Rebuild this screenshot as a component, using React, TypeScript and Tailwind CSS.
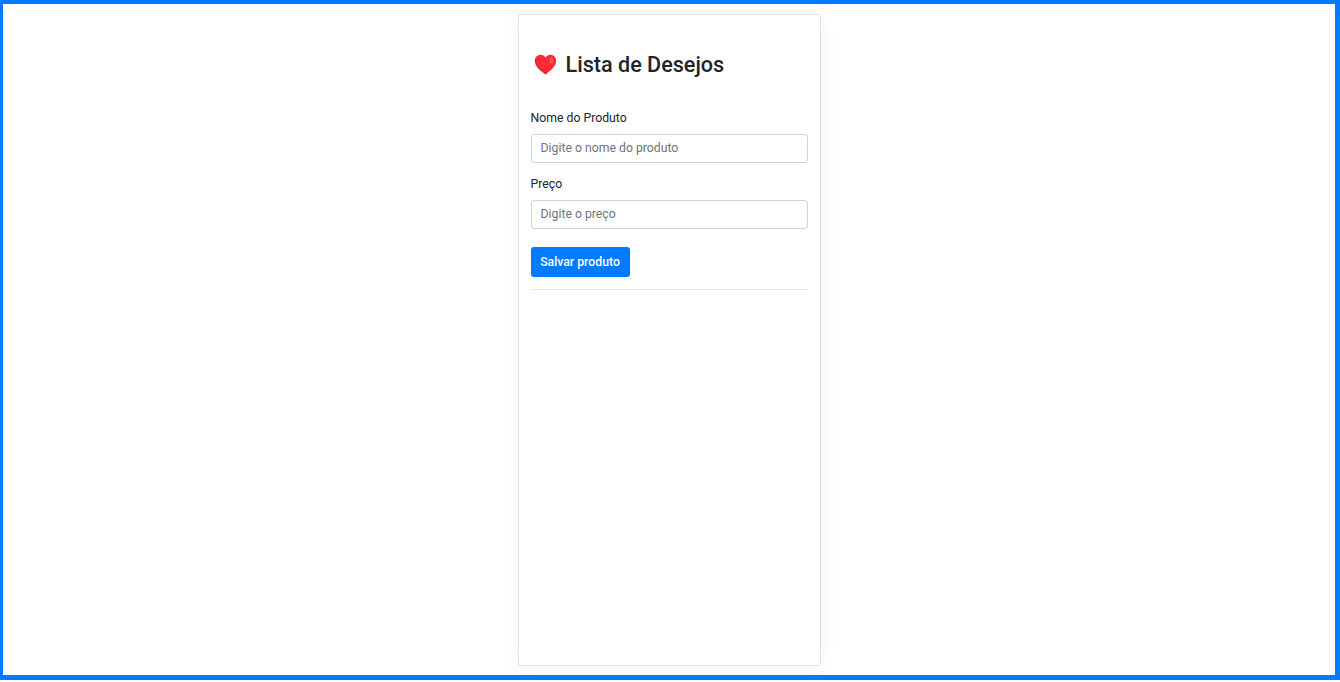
export default function App() {
  return (
    <div className="h-[680px] w-full overflow-hidden bg-white border-solid border-[#007bff] border-t-4 border-r-[5px] border-b-[5px] border-l-[3px] font-['Roboto',sans-serif] flex justify-center">
      <div className="mt-[10px] w-[303px] h-[652px] bg-white border border-[#e3e3e3] rounded-[3px] shadow-[0_0_16px_rgba(0,0,0,0.06)] px-[12px] shrink-0">
        {/* Title */}
        <div className="flex items-center mt-[35px] h-[30px]">
          <svg width="23" height="21" viewBox="0 0 24 22" className="ml-[3px] mr-[9px] mb-[2px]">
            <path d="M12 21.5C6 17 .8 13 .8 7.2 .8 3.4 3.6.8 6.8.8 9 .8 11 2 12 4 13 2 15 .8 17.2.8 20.4.8 23.2 3.4 23.2 7.2 23.2 13 18 17 12 21.5Z" fill="#fb2b3a" />
            <path d="M12 21.5C6 17 .8 13 .8 7.2c0-1.2.3-2.4.8-3.3C2 11 8 16 14 19.9Z" fill="#c9184a" opacity="0.4" />
            <ellipse cx="18" cy="6.8" rx="2" ry="3.2" fill="#ff7b80" opacity="0.5" />
          </svg>
          <h1 className="text-[21.6px] leading-[30px] font-medium text-[#212529]">Lista de Desejos</h1>
        </div>

        <form className="mt-[29px]">
          <label className="block text-[12.25px] leading-[18px] text-[#212529] mb-[7px]">Nome do Produto</label>
          <input
            type="text"
            placeholder="Digite o nome do produto"
            className="block w-full h-[29px] px-[9px] pb-[2px] bg-white border border-[#ced4da] rounded-[3px] text-[12.25px] placeholder:text-[#6c757d] outline-none"
          />
          <label className="block text-[12.25px] leading-[18px] text-[#212529] mt-[12px] mb-[7px]">Preço</label>
          <input
            type="text"
            placeholder="Digite o preço"
            className="block w-full h-[29px] px-[9px] pb-[2px] bg-white border border-[#ced4da] rounded-[3px] text-[12.25px] placeholder:text-[#6c757d] outline-none"
          />
          <button type="button" className="block mt-[18px] h-[30px] w-[99px] bg-[#007bff] rounded-[3px] text-white text-[12.25px] font-medium">
            Salvar produto
          </button>
        </form>
        <hr className="mt-[12px] border-0 border-t border-[#e9e9e9]" />
      </div>
    </div>
  );
}
